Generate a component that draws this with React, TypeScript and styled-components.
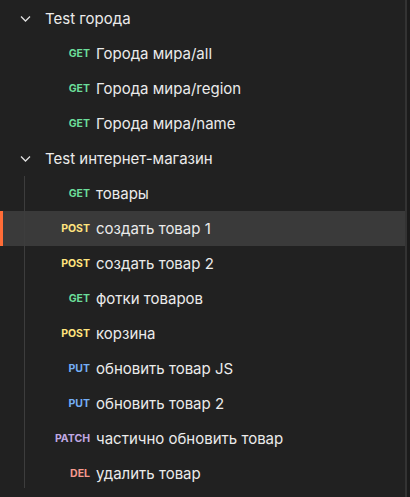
import React from "react";
import styled, { createGlobalStyle } from "styled-components";

const Global = createGlobalStyle`
  html, body { margin: 0; padding: 0; background: #212121; }
  body { font-family: Inter, "Noto Sans", sans-serif; }
`;

const Page = styled.div`
  display: flex;
  width: 410px;
  height: 497px;
  background: #212121;
  overflow: hidden;
`;

const Tree = styled.div`
  flex: 0 0 405px;
  padding-top: 1px;
  display: flex;
  flex-direction: column;
`;

const Scroll = styled.div`
  flex: 0 0 2px;
  background: #333333;
`;

const ScrollEdge = styled.div`
  flex: 1;
  background: #1b1b1b;
`;

const FolderRow = styled.div`
  height: 35px;
  display: flex;
  align-items: center;
  padding-left: 20px;
  gap: 14px;
  color: #ebebeb;
  font-size: 15px;
`;

const Chevron = styled.svg`
  width: 11px;
  height: 11px;
  flex: none;
`;

const Children = styled.div<{ $guide?: boolean }>`
  position: relative;
  display: flex;
  flex-direction: column;
  &::before {
    content: "";
    display: ${(p) => (p.$guide ? "block" : "none")};
    position: absolute;
    left: 24px;
    top: 0;
    bottom: 3px;
    width: 1px;
    background: #3d3d3d;
    z-index: 1;
  }
`;

const ReqRow = styled.div<{ $active?: boolean }>`
  height: 35px;
  display: flex;
  align-items: center;
  padding-left: 30px;
  gap: 6px;
  box-sizing: border-box;
  background: ${(p) => (p.$active ? "#3a3a3a" : "transparent")};
  border-left: 3px solid ${(p) => (p.$active ? "#ff6c37" : "transparent")};
`;

const colors: Record<string, string> = {
  GET: "#6bdd9a",
  POST: "#ffe47e",
  PUT: "#74aef6",
  PATCH: "#c0a8e1",
  DEL: "#f79a8e",
};

const Method = styled.span<{ $m: string }>`
  min-width: 57px;
  display: flex;
  justify-content: flex-end;
  font-size: 10.5px;
  font-weight: 700;
  color: ${(p) => colors[p.$m]};
`;

const Name = styled.span`
  color: #ebebeb;
  font-size: 15px;
  white-space: nowrap;
`;

type Req = { m: string; n: string; active?: boolean };

const folders: { name: string; guide?: boolean; items: Req[] }[] = [
  {
    name: "Test города",
    items: [
      { m: "GET", n: "Города мира/all" },
      { m: "GET", n: "Города мира/region" },
      { m: "GET", n: "Города мира/name" },
    ],
  },
  {
    name: "Test интернет-магазин",
    guide: true,
    items: [
      { m: "GET", n: "товары" },
      { m: "POST", n: "создать товар 1", active: true },
      { m: "POST", n: "создать товар 2" },
      { m: "GET", n: "фотки товаров" },
      { m: "POST", n: "корзина" },
      { m: "PUT", n: "обновить товар JS" },
      { m: "PUT", n: "обновить товар 2" },
      { m: "PATCH", n: "частично обновить товар" },
      { m: "DEL", n: "удалить товар" },
    ],
  },
];

export default function App() {
  return (
    <Page>
      <Global />
      <Tree>
        {folders.map((f) => (
          <React.Fragment key={f.name}>
            <FolderRow>
              <Chevron viewBox="0 0 11 11" fill="none">
                <path d="M1 3.5 L5.5 8 L10 3.5" stroke="#e0e0e0" strokeWidth="1.3" />
              </Chevron>
              {f.name}
            </FolderRow>
            <Children $guide={f.guide}>
              {f.items.map((r) => (
                <ReqRow key={r.n} $active={r.active}>
                  <Method $m={r.m}>{r.m}</Method>
                  <Name>{r.n}</Name>
                </ReqRow>
              ))}
            </Children>
          </React.Fragment>
        ))}
      </Tree>
      <Scroll />
      <ScrollEdge />
    </Page>
  );
}
